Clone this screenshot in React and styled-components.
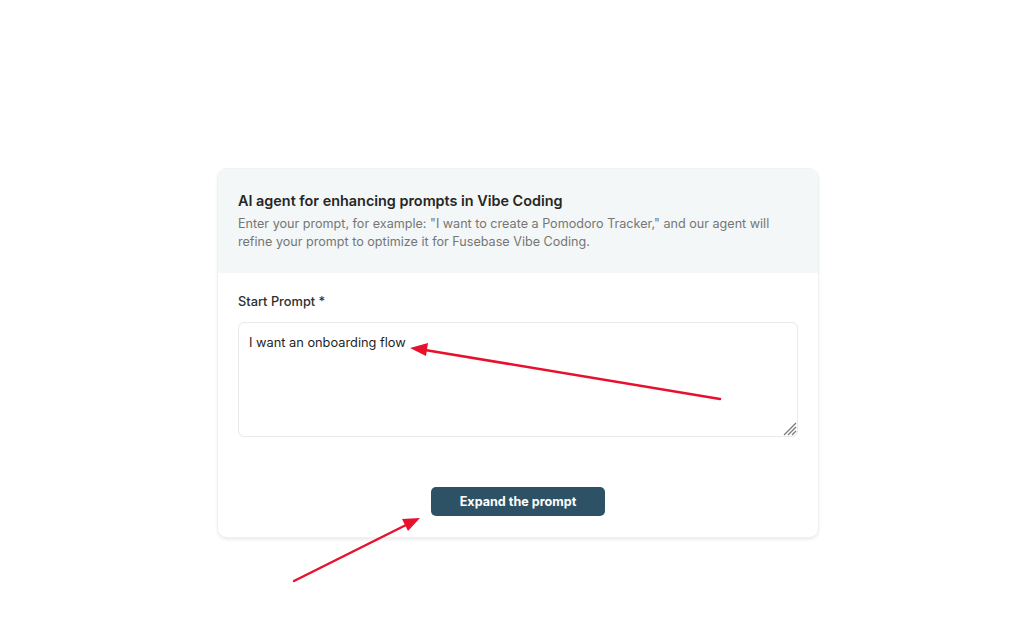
import React from "react";
import styled, { createGlobalStyle } from "styled-components";

const Global = createGlobalStyle`
  html, body { margin: 0; padding: 0; background: #ffffff; }
  body { font-family: Inter, "Noto Sans", sans-serif; color: #2b2b2b; }
  * { box-sizing: border-box; }
`;

const Page = styled.div`
  position: relative;
  width: 1024px;
  height: 630px;
  padding-top: 168px;
  padding-left: 217px;
`;

const Card = styled.div`
  width: 602px;
  border-radius: 10px;
  background: #ffffff;
  border: 1px solid #eef2f2;
  box-shadow: 0 2px 3px rgba(0, 0, 0, 0.07);
  overflow: hidden;
`;

const Header = styled.div`
  background: #f3f7f7;
  padding: 22px 20px 21px 20px;
  height: 104px;
`;

const Title = styled.h1`
  margin: 0 0 5px 0;
  font-size: 14.4px;
  line-height: 19px;
  font-weight: 600;
  color: #262626;
`;

const Desc = styled.p`
  margin: 0;
  font-size: 12.6px;
  line-height: 17.5px;
  color: #767676;
`;

const Body = styled.div`
  padding: 20px 20px 21px 20px;
  display: flex;
  flex-direction: column;
`;

const Label = styled.label`
  font-size: 12.8px;
  line-height: 18px;
  font-weight: 500;
  color: #2e2e2e;
  margin-bottom: 11px;
`;

const AreaWrap = styled.div`
  position: relative;
  width: 560px;
  height: 115px;
`;

const Area = styled.textarea`
  display: block;
  width: 100%;
  height: 100%;
  border: 1px solid #e6eaea;
  border-radius: 6px;
  padding: 11px 10px;
  font-family: Inter, "Noto Sans", sans-serif;
  font-size: 12.8px;
  line-height: 18px;
  color: #1f1f1f;
  resize: none;
  outline: none;
  background: #fff;
`;

const Grip = styled.svg`
  position: absolute;
  right: 1px;
  bottom: 1px;
  pointer-events: none;
`;

const Actions = styled.div`
  display: flex;
  justify-content: center;
  margin-top: 50px;
`;

const Button = styled.button`
  width: 174px;
  height: 29px;
  border: none;
  border-radius: 5px;
  background: #2d5266;
  color: #ffffff;
  font-family: Inter, "Noto Sans", sans-serif;
  font-size: 12.6px;
  font-weight: 700;
  cursor: pointer;
`;

const Overlay = styled.svg`
  position: absolute;
  left: 0;
  top: 0;
  pointer-events: none;
`;

export default function App() {
  return (
    <Page>
      <Global />
      <Card>
        <Header>
          <Title>AI agent for enhancing prompts in Vibe Coding</Title>
          <Desc>
            Enter your prompt, for example: "I want to create a Pomodoro Tracker," and our agent will
            refine your prompt to optimize it for Fusebase Vibe Coding.
          </Desc>
        </Header>
        <Body>
          <Label>Start Prompt *</Label>
          <AreaWrap>
            <Area defaultValue="I want an onboarding flow" />
            <Grip width="14" height="14" viewBox="0 0 14 14">
              <g stroke="#7a7a7a" strokeWidth="1.2">
                <line x1="13" y1="1" x2="1" y2="13" />
                <line x1="13" y1="5" x2="5" y2="13" />
                <line x1="13" y1="9" x2="9" y2="13" />
              </g>
            </Grip>
          </AreaWrap>
          <Actions>
            <Button>Expand the prompt</Button>
          </Actions>
        </Body>
      </Card>
      <Overlay width="1024" height="630" viewBox="0 0 1024 630">
        <line x1="720" y1="399" x2="425" y2="350" stroke="#e8112d" strokeWidth="2.5" strokeLinecap="round" />
        <polygon points="410,348 428,343 426,356" fill="#e8112d" />
        <line x1="294" y1="581" x2="406" y2="525" stroke="#e8112d" strokeWidth="2.5" strokeLinecap="round" />
        <polygon points="420,518 402,519 408,531" fill="#e8112d" />
      </Overlay>
    </Page>
  );
}
